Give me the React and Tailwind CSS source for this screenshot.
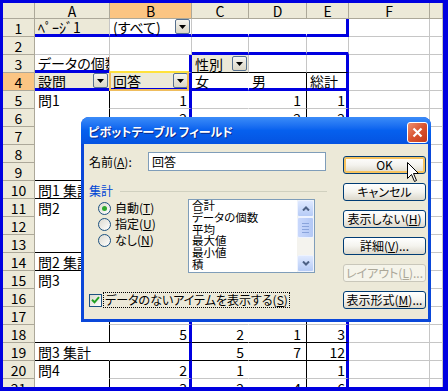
import React from "react";

const WIDTHS = ["w-[75px]", "w-[82px]", "w-[57px]", "w-[58px]", "w-[42px]", "w-[81px]", "w-[13px]"];
const NUMPAD = ["pr-[2px]", "pr-[2px]", "pr-[4px]", "pr-[5px]", "pr-[1px]", "pr-[2px]", "pr-[2px]"];

const RIGHT = {
  g: "border-r border-r-[#c6c6c6]",
  k: "border-r border-r-black",
  n: "border-r border-r-transparent",
  B: "border-r-[3px] border-r-[#0000e0]",
};
const BOTTOM = {
  g: "border-b border-b-[#c6c6c6]",
  k: "border-b border-b-black",
  n: "border-b border-b-transparent",
  B: "border-b-[3px] border-b-[#0000e0]",
};

// top of the pivot table (rows 1-4)
const headRows = [
  [
    { t: "ﾍﾟｰｼﾞ1", field: true, b: "B" },
    { t: "(すべて)", drop: true, b: "B" },
    { r: "n", b: "B" },
    { r: "n", b: "B" },
    { r: "B", b: "B" },
    {},
    {},
  ],
  [{}, {}, { b: "B" }, { b: "B" }, { b: "B" }, {}, {}],
  [
    { t: "データの個数", clip: true, b: "B" },
    { r: "B" },
    { t: "性別", field: true, drop: true, b: "k" },
    { b: "k" },
    { r: "B", b: "k" },
    {},
    {},
  ],
  [
    { t: "設問", field: true, drop: true, b: "B" },
    { t: "回答", field: true, drop: true, active: true, r: "B", b: "B" },
    { t: "女", r: "n", b: "B" },
    { t: "男", r: "k", b: "B" },
    { t: "総計", r: "B", b: "B" },
    {},
    {},
  ],
];

const groups = [
  {
    name: "問1",
    rows: [["1", "", "1", "1"], ["2", "", "2", "2"], ["3", "1", "", "1"], ["4", "1", "1", "2"], ["5", "", "1", "1"]],
    total: ["2", "5", "7"],
  },
  {
    name: "問2",
    rows: [["1", "2", "1", "3"], ["2", "1", "3", "4"], ["3", "2", "3", "5"]],
    total: ["5", "7", "12"],
  },
  {
    name: "問3",
    rows: [["2", "1", "", "1"], ["3", "2", "2", "4"], ["4", "", "4", "4"], ["5", "2", "1", "3"]],
    total: ["5", "7", "12"],
  },
  {
    name: "問4",
    rows: [["2", "1", "", "1"], ["3", "2", "4", "6"]],
  },
];

const dataRows = [];
groups.forEach((g) => {
  g.rows.forEach((v, i) => {
    const last = g.total && i === g.rows.length - 1;
    const b = last ? "k" : "g";
    dataRows.push([
      { t: i === 0 ? g.name : "", r: "k", b: last ? "k" : "n" },
      { t: v[0], num: true, r: "B", b },
      { t: v[1], num: true, r: "n", b },
      { t: v[2], num: true, r: "k", b },
      { t: v[3], num: true, r: "B", b },
      {},
      {},
    ]);
  });
  if (g.total) {
    dataRows.push([
      { t: g.name + " 集計", r: "n", b: "k" },
      { r: "B", b: "k" },
      { t: g.total[0], num: true, r: "n", b: "k" },
      { t: g.total[1], num: true, r: "k", b: "k" },
      { t: g.total[2], num: true, r: "B", b: "k" },
      {},
      {},
    ]);
  }
});

const sheetRows = [...headRows, ...dataRows];

function Drop() {
  return (
    <span className="flex h-[15px] w-[15px] shrink-0 items-center justify-center rounded-[2px] border border-[#56708f] bg-linear-to-b from-[#f6f5f0] to-[#dad6c6]">
      <svg width="7" height="4" viewBox="0 0 7 4">
        <path d="M0 0h7L3.5 4z" fill="#000" />
      </svg>
    </span>
  );
}

function Cell({ col, c }) {
  const { t = "", r = "g", b = "g", field, drop, active, clip, num } = c;
  return (
    <div
      className={[
        "relative flex h-full shrink-0 items-center whitespace-nowrap text-[14px] leading-none",
        WIDTHS[col],
        RIGHT[r],
        BOTTOM[b],
        field ? "bg-[#ece9d8]" : "",
        clip ? "overflow-hidden" : "",
        num ? "justify-end " + NUMPAD[col] : drop ? "justify-between pl-[3px] pr-px" : "pl-[3px]",
      ].join(" ")}
    >
      <span>{t}</span>
      {drop && <Drop />}
      {active && (
        <span className="pointer-events-none absolute -top-[2px] -left-px right-0 -bottom-[3px] border-2 border-[#efbd5d] border-t-[#ffe23c]" />
      )}
    </div>
  );
}

function U({ children }) {
  return <span className="underline underline-offset-[1px]">{children}</span>;
}

function XpButton({ children, def, disabled }) {
  return (
    <div
      className={`flex h-[18px] w-[83px] items-center justify-center rounded-[3px] border ${
        disabled
          ? "border-[#c9c7ba] bg-[#f5f4ea] text-[#aca899]"
          : "border-[#003c74] bg-linear-to-b from-white via-[#f4f3ee] to-[#dcd8cb] text-black"
      } ${def ? "shadow-[inset_0_0_0_2px_#f6c35f]" : ""}`}
    >
      {children}
    </div>
  );
}

function Radio({ on, children }) {
  return (
    <div className="flex h-[16px] items-center gap-[4px]">
      <span className="flex h-[13px] w-[13px] items-center justify-center rounded-full border border-[#1c5180] bg-linear-to-br from-[#dcdad0] to-white">
        {on && <span className="h-[5px] w-[5px] rounded-full bg-[#2fa82f]" />}
      </span>
      <span>{children}</span>
    </div>
  );
}

function ScrollBtn({ up }) {
  return (
    <div className="flex h-[17px] w-[17px] items-center justify-center rounded-[2px] border border-[#eef3ff] bg-linear-to-b from-[#dfe9ff] to-[#b6cbf6]">
      <svg width="8" height="5" viewBox="0 0 8 5">
        <path d={up ? "M1 4.5L4 1.5L7 4.5" : "M1 0.5L4 3.5L7 0.5"} stroke="#4d6185" strokeWidth="2" fill="none" />
      </svg>
    </div>
  );
}

function PivotDialog() {
  return (
    <div className="absolute left-[78px] top-[114px] flex h-[205px] w-[350px] flex-col rounded-t-[8px] bg-[#0a47d9]">
      <div className="flex h-[27px] shrink-0 items-center rounded-t-[8px] bg-linear-to-b from-[#3b8cf8] via-[#0660ee] to-[#0553e1] pl-[7px] pr-[3px] pt-[3px]">
        <span className="text-[12px] font-bold leading-none text-white [text-shadow:1px_1px_0_#0b2a8a]">
          ピボットテーブル フィールド
        </span>
        <div className="ml-auto flex h-[21px] w-[21px] items-center justify-center rounded-[3px] border border-white bg-linear-to-br from-[#ec8e70] via-[#d9532f] to-[#c2391a]">
          <svg width="11" height="11" viewBox="0 0 11 11">
            <path d="M1.5 1.5l8 8M9.5 1.5l-8 8" stroke="white" strokeWidth="2.2" />
          </svg>
        </div>
      </div>

      <div className="mx-[3px] mb-[3px] flex flex-1 bg-[#ece9d8] text-[12px] leading-none text-black">
        <div className="flex w-[259px] shrink-0 flex-col pl-[5px] pt-[8px]">
          <div className="flex h-[19px] items-center">
            <span className="w-[59px]">
              名前(<U>A</U>):
            </span>
            <div className="flex h-[19px] w-[178px] items-center border border-[#7f9db9] bg-white pl-[3px]">回答</div>
          </div>

          <div className="mt-[13px] flex h-[14px] items-center">
            <span className="text-[#0046d5]">集計</span>
            <span className="ml-[7px] w-[207px] border-t border-[#d0d0bf]" />
          </div>

          <div className="mt-px flex">
            <div className="flex w-[99px] flex-col pl-[9px] pt-px">
              <Radio on>
                自動(<U>T</U>)
              </Radio>
              <Radio>
                指定(<U>U</U>)
              </Radio>
              <Radio>
                なし(<U>N</U>)
              </Radio>
            </div>
            <div className="flex h-[74px] w-[127px] border border-[#7f9db9] bg-white">
              <div className="flex flex-1 flex-col overflow-hidden pl-[3px] text-[11.5px] leading-[11.8px]">
                <span>合計</span>
                <span>データの個数</span>
                <span>平均</span>
                <span>最大値</span>
                <span>最小値</span>
                <span>積</span>
              </div>
              <div className="flex w-[17px] flex-col bg-[#f4f3ee]">
                <ScrollBtn up />
                <div className="flex h-[21px] w-[17px] flex-col items-center justify-center gap-[2px] rounded-[2px] border border-[#eef3ff] bg-linear-to-r from-[#c9d8fc] to-[#b3c8f5]">
                  <span className="h-px w-[7px] bg-[#8aa4dc]" />
                  <span className="h-px w-[7px] bg-[#8aa4dc]" />
                  <span className="h-px w-[7px] bg-[#8aa4dc]" />
                  <span className="h-px w-[7px] bg-[#8aa4dc]" />
                </div>
                <div className="flex-1" />
                <ScrollBtn />
              </div>
            </div>
          </div>

          <div className="mt-[19px] flex h-[16px] items-center">
            <span className="flex h-[13px] w-[13px] items-center justify-center border border-[#1c5180] bg-linear-to-br from-[#dcdad0] to-white">
              <svg width="9" height="8" viewBox="0 0 9 8">
                <path d="M1 3.8l2.5 2.5L8 1.2" stroke="#21a121" strokeWidth="2" fill="none" />
              </svg>
            </span>
            <span className="ml-px flex h-[16px] items-center border border-dotted border-black px-px">
              データのないアイテムを表示する(<U>S</U>)
            </span>
          </div>
        </div>

        <div className="flex flex-col gap-[9px] pt-[12px]">
          <XpButton def>OK</XpButton>
          <XpButton>キャンセル</XpButton>
          <XpButton>
            表示しない(<U>H</U>)
          </XpButton>
          <XpButton>
            詳細(<U>V</U>)...
          </XpButton>
          <XpButton disabled>
            レイアウト(<U>L</U>)...
          </XpButton>
          <XpButton>
            表示形式(<U>M</U>)...
          </XpButton>
        </div>
      </div>
    </div>
  );
}

export default function App() {
  return (
    <div className="relative h-[391px] w-[448px] overflow-hidden border-t-[3px] border-l-[3px] border-r-[5px] border-b-[4px] border-[#0000e0] bg-white font-['Noto_Sans_CJK_JP',sans-serif] text-black [font-feature-settings:'palt']">
      <div className="flex h-[16px]">
        <div className="w-[32px] shrink-0 border-r border-b border-[#aca899] bg-[#ece9d8]" />
        {["A", "B", "C", "D", "E", "F", ""].map((l, i) => (
          <div
            key={i}
            className={`flex shrink-0 items-center justify-center border-r border-b border-[#aca899] text-[14px] leading-none ${WIDTHS[i]} ${
              i === 1 ? "bg-[#fbc583]" : "bg-[#ece9d8]"
            }`}
          >
            {l}
          </div>
        ))}
      </div>

      {sheetRows.map((row, ri) => (
        <div key={ri} className="flex h-[18px]">
          <div
            className={`flex w-[32px] shrink-0 items-center justify-center border-r border-b border-[#aca899] text-[14px] leading-none ${
              ri === 3 ? "bg-[#fbc583]" : "bg-[#ece9d8]"
            }`}
          >
            {ri + 1}
          </div>
          {row.map((c, ci) => (
            <Cell key={ci} col={ci} c={c} />
          ))}
        </div>
      ))}

      <PivotDialog />

      <svg className="pointer-events-none absolute left-[404px] top-[159px]" width="13" height="21" viewBox="0 0 13 21">
        <path d="M0.5 0.5L0.5 16.5L4.5 12.5L7.5 19.5L9.5 18.5L6.5 11.5L11.5 11.5Z" fill="white" stroke="black" strokeWidth="1" />
      </svg>
    </div>
  );
}
